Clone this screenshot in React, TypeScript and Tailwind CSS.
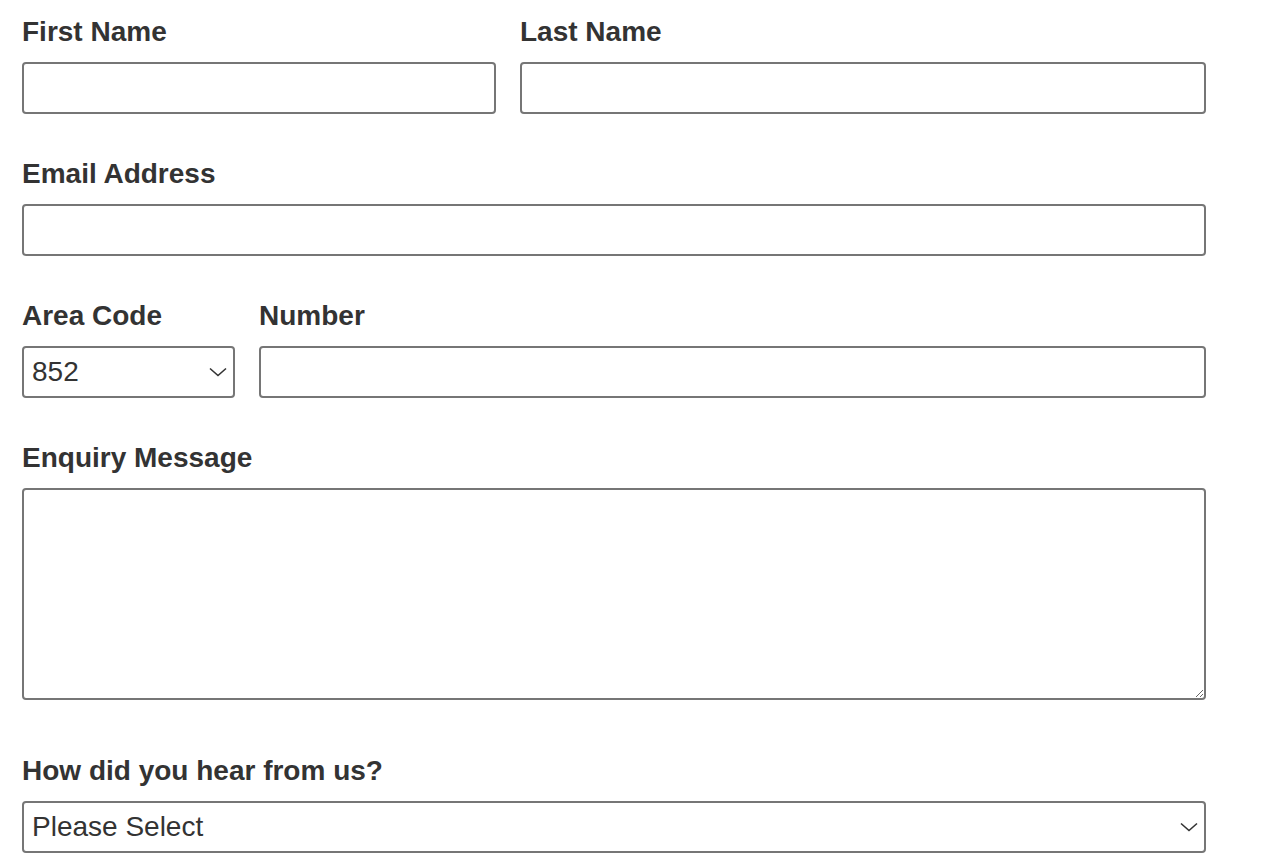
import type { ReactNode } from 'react';

const labelCls = 'block text-[28px] leading-[32px] font-bold text-[#333333] mb-[14px]';
const inputCls =
  'block w-full h-[52px] border-2 border-[#767676] rounded-[4px] bg-white px-[8px] text-[28px] text-[#333333] outline-none';

function Field({ label, children }: { label: string; children: ReactNode }) {
  return (
    <div>
      <label className={labelCls}>{label}</label>
      {children}
    </div>
  );
}

function Chevron() {
  return (
    <svg
      className="pointer-events-none absolute right-[8px] top-1/2 -translate-y-1/2"
      width="18"
      height="10"
      viewBox="0 0 18 10"
      fill="none"
    >
      <path d="M1 1.5 L9 8.5 L17 1.5" stroke="#333333" strokeWidth="1.6" />
    </svg>
  );
}

function Select({ value, options }: { value: string; options: string[] }) {
  return (
    <div className="relative">
      <select defaultValue={value} className={`${inputCls} appearance-none pr-[36px]`}>
        {options.map(o => (
          <option key={o}>{o}</option>
        ))}
      </select>
      <Chevron />
    </div>
  );
}

export default function App() {
  return (
    <div
      className="min-h-[862px] bg-white pl-[22px] pt-[16px]"
      style={{ fontFamily: '"Liberation Sans", Arial, sans-serif' }}
    >
      <form className="w-[1184px] flex flex-col gap-[44px]">
        <div className="grid grid-cols-[474px_1fr] gap-x-[24px]">
          <Field label="First Name">
            <input type="text" className={inputCls} />
          </Field>
          <Field label="Last Name">
            <input type="text" className={inputCls} />
          </Field>
        </div>

        <Field label="Email Address">
          <input type="email" className={inputCls} />
        </Field>

        <div className="grid grid-cols-[213px_1fr] gap-x-[24px]">
          <Field label="Area Code">
            <Select value="852" options={['852', '853', '86', '1', '44']} />
          </Field>
          <Field label="Number">
            <input type="tel" className={inputCls} />
          </Field>
        </div>

        <Field label="Enquiry Message">
          <textarea className="block w-full h-[212px] border-2 border-[#767676] rounded-[4px] bg-white px-[8px] py-[4px] text-[28px] text-[#333333] outline-none" />
        </Field>

        <div className="mt-[11px]">
          <Field label="How did you hear from us?">
            <Select
              value="Please Select"
              options={['Please Select', 'Search Engine', 'Social Media', 'Friends', 'Other']}
            />
          </Field>
        </div>
      </form>
    </div>
  );
}
